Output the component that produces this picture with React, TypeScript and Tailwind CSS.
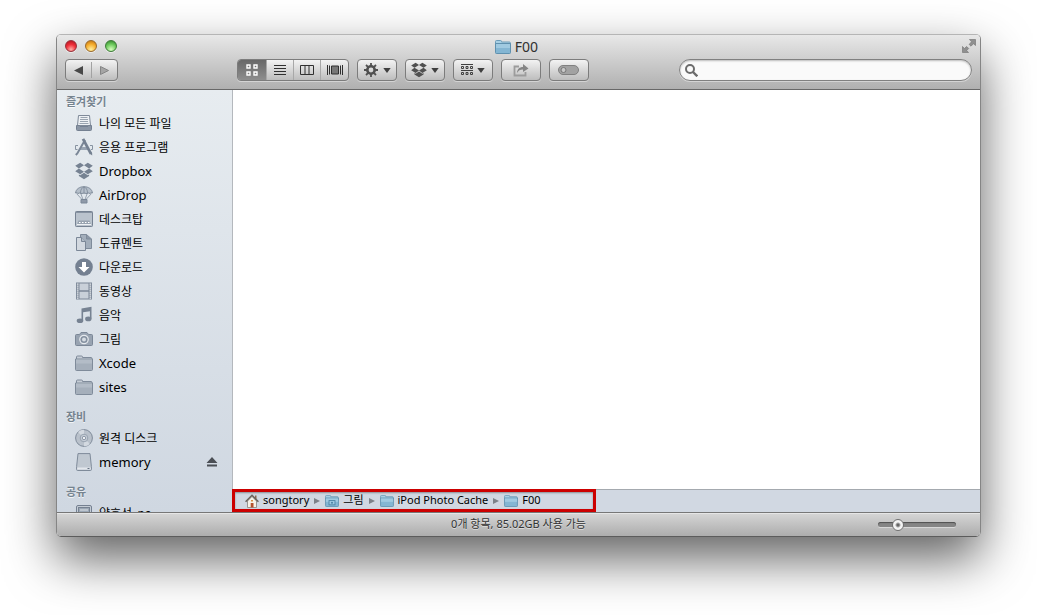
import React, { useState } from "react";

type IconProps = { className?: string };

type SidebarItem = {
    label: string;
    icon: React.FC<IconProps>;
    ejectable?: boolean;
};

type SidebarSection = {
    title: string;
    items: SidebarItem[];
};

const Svg: React.FC<{ children: React.ReactNode }> = ({ children }) => (
    <svg viewBox="0 0 18 18" className="w-[18px] h-[18px] shrink-0" aria-hidden="true">
        {children}
    </svg>
);

const AllFilesIcon = () => (
    <Svg>
        <path d="M3.5 1.5h11l1 10h-13z" fill="#eef1f4" stroke="#7f8a99" />
        <path d="M5.500 3.500h7M5 5.500h8M5 7.500h8M4.500 9.500h9" stroke="#9aa4b0" />
        <path d="M1.500 11.500h3l.5 1h8l.5-1h3v4q0 1-1 1h-13q-1 0-1-1z" fill="#8b96a5" stroke="#748091" />
    </Svg>
);

const ApplicationsIcon = () => (
    <Svg>
        <path d="M3 7.500H.5v4h2M15 7.500h2.500v4H16" fill="none" stroke="#8793a1" />
        <path d="M5 9h8v3H5z" fill="#9aa5b3" />
        <path d="M10 2L2.300 15.500.8 17" fill="none" stroke="#7b8797" strokeWidth="2" />
        <path d="M8 .8l8 15" stroke="#748091" strokeWidth="2.800" />
        <path d="M14.600 15.500l2.600 2-.2-3.300" fill="#748091" />
    </Svg>
);

const dropboxPath =
    "M5.2.8L9 3.3 3.9 6.5.2 3.8zM12.8.8L9 3.3l5.1 3.2 3.7-2.7zM.2 9.3l3.7-2.8L9 9.7l-3.8 2.6zM17.8 9.3l-3.7-2.8L9 9.7l3.8 2.6zM9 10.7l3.8 2.6 1.3-.8v1.6L9 17.2l-5.1-3.1v-1.6l1.3.8z";

const DropboxIcon = () => (
    <Svg>
        <path d={dropboxPath} fill="#768292" />
    </Svg>
);

const AirDropIcon = () => (
    <Svg>
        <path d="M.6 7C.8 3.200 4.500.7 9 .7s8.200 2.500 8.400 6.300q-1.200-1-2.400.5-1.200-1-3 0Q9 6.800 6 7.500q-1.800-1-3 0Q1.800 6 .6 7z" fill="#b5bfca" stroke="#7f8b9a" />
        <path d="M5.500 7C5.500 3.500 7 1.500 9 1c2 .5 3.500 2.500 3.500 6M9 1v6" fill="none" stroke="#7f8b9a" strokeWidth=".9" />
        <path d="M1.500 7.500L7 13.500M5.800 7.500L8 13.500M12.200 7.500L10 13.500M16.500 7.500L11 13.500" stroke="#8490a0" strokeWidth=".8" />
        <path d="M6 13.500h6v3.500H6z" fill="#8e99a8" stroke="#7b8797" />
    </Svg>
);

const DesktopIcon = () => (
    <Svg>
        <rect x=".5" y="1.500" width="17" height="15" rx=".8" fill="#bac3cd" stroke="#768292" />
        <path d="M1 2.500h16" stroke="#8692a1" />
        <path d="M3.500 10.500h11l1.500 4H2z" fill="#98a3b0" />
        <path d="M2 14.500h14" stroke="#eef1f4" />
        <path d="M4 12.500h1.500M7 12.500h1.500M10 12.500h1.500M13 12.500h1.500" stroke="#fff" />
    </Svg>
);

const DocumentsIcon = () => (
    <Svg>
        <path d="M5.500.5h6l5 4.500v9.500h-11z" fill="#a3aebb" stroke="#7f8b9a" />
        <path d="M11.500.5V5h5" fill="#8c98a7" stroke="#7f8b9a" />
        <path d="M1.500 3.500h5l4 4v9h-9z" fill="#d3d9e0" stroke="#7b8797" />
        <path d="M6.500 3.500v4h4" fill="#b3bdc8" stroke="#7b8797" />
    </Svg>
);

const DownloadsIcon = () => (
    <Svg>
        <circle cx="9" cy="9" r="8.800" fill="#748091" />
        <path d="M7 4h4v5h3.500L9 14.500 3.500 9H7z" fill="#fff" />
    </Svg>
);

const MoviesIcon = () => (
    <Svg>
        <path d="M1 .5h16v17H1z" fill="#7b8797" />
        <path d="M4.500 1.500h9v6.800h-9zM4.500 9.700h9v6.800h-9z" fill="#c9d0d9" />
        <path d="M2.700 1.500v16M15.300 1.500v16" stroke="#e6eaee" strokeWidth="1.600" strokeDasharray="1.200 .8" />
    </Svg>
);

const MusicIcon = () => (
    <Svg>
        <path d="M6.500 2.500L16.500.8v12h-1.600V5.200L8.100 6.300v8.200H6.500z" fill="#768292" />
        <ellipse cx="5" cy="14.800" rx="3.300" ry="2.300" fill="#768292" />
        <ellipse cx="13.300" cy="12.900" rx="3.200" ry="2.300" fill="#768292" />
    </Svg>
);

const PicturesIcon = () => (
    <Svg>
        <path d="M.5 5.500q0-1 1-1h3l1.500-2h6l1.500 2h3q1 0 1 1v9q0 1-1 1h-15q-1 0-1-1z" fill="#98a3b1" stroke="#7b8797" />
        <circle cx="9" cy="9.500" r="4.800" fill="#e6eaee" />
        <circle cx="9" cy="9.500" r="3.600" fill="#8490a0" />
        <circle cx="9" cy="9.500" r="2" fill="#d6dce2" />
    </Svg>
);

const FolderIcon = () => (
    <Svg>
        <path d="M1.500 5V3q0-1 1-1h4q1 0 1 1v.5h8.500q1 0 1 1V6" fill="#c6cdd6" stroke="#7f8b9a" />
        <path d="M.5 5h17v10.500q0 1-1 1h-15q-1 0-1-1z" fill="#a5afbb" stroke="#7f8b9a" />
        <path d="M1 5.500h16v4H1z" fill="#b3bcc7" />
    </Svg>
);

const DiscIcon = () => (
    <Svg>
        <circle cx="9" cy="9" r="8.400" fill="#b9c1cb" stroke="#7f8b9a" />
        <path d="M9 9L3 3q3-2.500 6-2.300zM9 9l6 6q-3 2.500-6 2.300z" fill="#d3d9e0" />
        <circle cx="9" cy="9" r="3.800" fill="#c6cdd6" stroke="#98a3b0" />
        <circle cx="9" cy="9" r="1.700" fill="#eef1f4" stroke="#8e99a8" />
    </Svg>
);

const DriveIcon = () => (
    <Svg>
        <path d="M3 .6h12l1.400 13v2.900q0 1-1 1H2.600q-1 0-1-1v-2.900z" fill="#c0c8d1" stroke="#7f8b9a" />
        <path d="M2.200 14.500h13.600v2H2.200z" fill="#e3e7ec" />
        <path d="M12.500 15.500h2" stroke="#657283" />
    </Svg>
);

const ComputerIcon = () => (
    <Svg>
        <rect x="1.500" y="1.500" width="15" height="14" rx="1.500" fill="#c4ccd5" stroke="#748091" />
        <rect x="3.500" y="3.500" width="11" height="9" fill="#9ba7b5" stroke="#768292" />
        <path d="M5 6h8" stroke="#dfe4e9" />
    </Svg>
);

const BlueFolder: React.FC<IconProps & { pictures?: boolean }> = ({ className, pictures }) => (
    <svg viewBox="0 0 16 14" className={className} aria-hidden="true">
        <path d="M.5 4V1.500q0-1 1-1h4q1 0 1 1v.5h8q.8 0 .8 1V5" fill="#a8d0e5" stroke="#6d9cb8" />
        <path d="M.5 3.500h15v9q0 1-.8 1H1.300q-.8 0-.8-1z" fill="#84b6d3" stroke="#5f91af" />
        <path d="M1 4h14v4H1z" fill="#a0cae1" />
        {pictures && (
            <>
                <rect x="4.500" y="6.500" width="7" height="5" fill="#9cc8df" stroke="#4a82a3" />
                <circle cx="8" cy="9" r="1.200" fill="#4a82a3" />
            </>
        )}
    </svg>
);

const HomeIcon: React.FC<IconProps> = ({ className }) => (
    <svg viewBox="0 0 14 14" className={className} aria-hidden="true">
        <path d="M2.500 7L7 2.500 11.500 7v6.500h-9z" fill="#f6f2e8" stroke="#88817a" strokeWidth=".8" />
        <path d="M10 1.500h1.500v4H10z" fill="#8d6a52" />
        <path d="M.6 7.800L7 1.300l6.400 6.500" fill="none" stroke="#6a625c" strokeWidth="1.500" />
        <path d="M5.700 9h2.800v4.500H5.700z" fill="#b4502c" />
        <path d="M6 6h2v1.500H6z" fill="#d48d45" />
    </svg>
);

const sections: SidebarSection[] = [
    {
        title: "즐겨찾기",
        items: [
            { label: "나의 모든 파일", icon: AllFilesIcon },
            { label: "응용 프로그램", icon: ApplicationsIcon },
            { label: "Dropbox", icon: DropboxIcon },
            { label: "AirDrop", icon: AirDropIcon },
            { label: "데스크탑", icon: DesktopIcon },
            { label: "도큐멘트", icon: DocumentsIcon },
            { label: "다운로드", icon: DownloadsIcon },
            { label: "동영상", icon: MoviesIcon },
            { label: "음악", icon: MusicIcon },
            { label: "그림", icon: PicturesIcon },
            { label: "Xcode", icon: FolderIcon },
            { label: "sites", icon: FolderIcon },
        ],
    },
    {
        title: "장비",
        items: [
            { label: "원격 디스크", icon: DiscIcon },
            { label: "memory", icon: DriveIcon, ejectable: true },
        ],
    },
    {
        title: "공유",
        items: [{ label: "양호석_pc", icon: ComputerIcon }],
    },
];

const lights = [
    { label: "Close", color: "bg-[radial-gradient(circle_at_50%_85%,#ffb0a8,#f0303a_50%,#a8101c)] border-[#96303a]" },
    { label: "Minimize", color: "bg-[radial-gradient(circle_at_50%_85%,#fff0a0,#f5ac2c_55%,#b86c10)] border-[#98692c]" },
    { label: "Zoom", color: "bg-[radial-gradient(circle_at_50%_85%,#d8ffc0,#6cc95c_55%,#2c7c28)] border-[#3d7a38]" },
];

const viewModes = [
    {
        label: "Icons",
        icon: (
            <svg viewBox="0 0 12 12" className="w-3 h-3" fill="none" stroke="currentColor" strokeWidth="1.400">
                <path d="M1 1h3v3H1zM8 1h3v3H8zM1 8h3v3H1zM8 8h3v3H8z" />
            </svg>
        ),
    },
    {
        label: "List",
        icon: (
            <svg viewBox="0 0 12 12" className="w-3 h-3" stroke="currentColor">
                <path d="M0 1.500h12M0 4.500h12M0 7.500h12M0 10.500h12" />
            </svg>
        ),
    },
    {
        label: "Columns",
        icon: (
            <svg viewBox="0 0 14 12" className="w-3.5 h-3" fill="none" stroke="currentColor">
                <path d="M.5 1.500h13v9H.5zM5 1v10M9 1v10" />
            </svg>
        ),
    },
    {
        label: "Cover Flow",
        icon: (
            <svg viewBox="0 0 16 12" className="w-4 h-3" stroke="currentColor">
                <path d="M.5 1v10M2.500 1.500v9M13.500 1.500v9M15.500 1v10" />
                <path d="M4.500 2h7v8h-7z" fill="#777" />
            </svg>
        ),
    },
];

const crumbs = ["songtory", "그림", "iPod Photo Cache", "F00"];

const buttonLook =
    "h-[22px] flex items-center justify-center rounded-[4px] border border-[#7c7c7c] bg-linear-to-b from-[#f3f3f3] to-[#bdbdbd] shadow-[0_1px_0_rgba(255,255,255,0.4)]";

const Caret = () => (
    <svg viewBox="0 0 8 5" className="w-2 h-[5px]" aria-hidden="true">
        <path d="M.3 0h7.400L4 5z" fill="#3f3f3f" />
    </svg>
);

const ToolButton: React.FC<{ label: string; children: React.ReactNode }> = ({ label, children }) => (
    <button type="button" aria-label={label} className={`${buttonLook} w-10 gap-1`}>
        {children}
    </button>
);

const Toolbar: React.FC = () => {
    const [view, setView] = useState("Icons");

    return (
        <div className="flex items-center gap-2 px-2">
            <div className={`${buttonLook} w-[53px]`}>
                <button type="button" aria-label="Back" className="flex-1 flex justify-center">
                    <svg viewBox="0 0 9 9" className="w-[9px] h-[9px]">
                        <path d="M9 0v9L0 4.500z" fill="#484848" />
                    </svg>
                </button>
                <span className="w-px h-4 bg-[#a2a2a2]" />
                <button type="button" aria-label="Forward" className="flex-1 flex justify-center">
                    <svg viewBox="0 0 9 9" className="w-[9px] h-[9px]">
                        <path d="M.5.5v8l8-4z" fill="#a5a5a5" stroke="#858585" />
                    </svg>
                </button>
            </div>

            <div className={`${buttonLook} w-28 ml-[111px] overflow-hidden`}>
                {viewModes.map((mode) => (
                    <button
                        key={mode.label}
                        type="button"
                        aria-label={mode.label}
                        aria-pressed={view === mode.label}
                        onClick={() => setView(mode.label)}
                        className="w-[27px] first:w-auto first:flex-1 h-5 flex items-center justify-center text-[#303030] border-r border-[#a8a8a8] last:border-r-0 aria-pressed:bg-linear-to-b aria-pressed:from-[#686868] aria-pressed:to-[#8e8e8e] aria-pressed:text-white"
                    >
                        {mode.icon}
                    </button>
                ))}
            </div>

            <ToolButton label="Action">
                <svg viewBox="0 0 16 16" className="w-4 h-4">
                    <circle cx="8" cy="8" r="3.700" fill="none" stroke="#505050" strokeWidth="2.600" />
                    <path
                        d="M8 1v3M8 12v3M1 8h3M12 8h3M3 3l2.200 2.200M10.800 10.800L13 13M3 13l2.200-2.200M10.800 5.200L13 3"
                        stroke="#505050"
                        strokeWidth="1.800"
                    />
                </svg>
                <Caret />
            </ToolButton>
            <ToolButton label="Dropbox">
                <svg viewBox="0 0 18 18" className="w-4 h-4">
                    <path d={dropboxPath} fill="#505050" />
                </svg>
                <Caret />
            </ToolButton>
            <ToolButton label="Arrange">
                <svg viewBox="0 0 12 12" className="w-3 h-3" fill="none" stroke="#404040">
                    <path d="M0 .5h12M0 6.500h12" />
                    <path d="M.5 2.500h2v2h-2zM5 2.500h2v2H5zM9.500 2.500h2v2h-2zM.5 8.500h2v2h-2zM5 8.500h2v2H5zM9.500 8.500h2v2h-2z" />
                </svg>
                <Caret />
            </ToolButton>
            <ToolButton label="Share">
                <svg viewBox="0 0 16 14" className="w-4 h-3.5">
                    <path d="M6 3.500H1.500v9h11V9" fill="none" stroke="#9c9c9c" strokeWidth="1.800" />
                    <path d="M4 10c.2-4 2.500-6 6-6V1l5.500 4.500L10 9V6.500c-3 0-4.500 1-6 3.500z" fill="#868686" />
                </svg>
            </ToolButton>
            <ToolButton label="Edit Tags">
                <svg viewBox="0 0 22 10" className="w-[22px] h-2.5 shrink-0">
                    <rect x=".5" y=".5" width="20" height="9" rx="4.500" fill="#a2a2a2" stroke="#808080" />
                    <circle cx="5.500" cy="5" r="2.500" fill="#c8c8c8" stroke="#777" />
                </svg>
            </ToolButton>

            <label className="ml-auto w-[293px] h-[22px] flex items-center gap-1 px-[5px] rounded-full border border-[#808080] bg-[#fafafa] shadow-[inset_0_1px_2px_rgba(0,0,0,0.25),0_1px_0_rgba(255,255,255,0.4)]">
                <svg viewBox="0 0 13 13" className="w-[13px] h-[13px] shrink-0" fill="none" stroke="#6c6c6c" strokeWidth="2">
                    <circle cx="5" cy="5" r="4" />
                    <path d="M8 8l4.300 4.300" strokeWidth="2.400" />
                </svg>
                <input type="search" aria-label="Search" className="min-w-0 flex-1 bg-transparent outline-none" />
            </label>
        </div>
    );
};

const Sidebar: React.FC = () => (
    <aside className="w-[175px] shrink-0 flex flex-col gap-[9px] pt-[3px] overflow-hidden bg-linear-to-b from-[#e7ecf0] to-[#cfd7e1]">
        {sections.map((section) => (
            <section key={section.title} className="shrink-0">
                <h2 className="h-[18px] pl-[9px] flex items-center text-[11px] font-bold text-[#75838f] [text-shadow:0_1px_0_rgba(255,255,255,0.7)]">
                    {section.title}
                </h2>
                <ul>
                    {section.items.map(({ label, icon: Icon, ejectable }) => (
                        <li key={label} className="h-6 pl-[18px] pr-3.5 flex items-center justify-between">
                            <a href="#" className={`flex items-center gap-1.5 whitespace-nowrap ${/^[a-z]/i.test(label) ? "text-[13px]" : "text-xs"}`}>
                                <Icon />
                                <span className="pt-0.5">{label}</span>
                            </a>
                            {ejectable && (
                                <button type="button" aria-label="Eject">
                                    <svg viewBox="0 0 12 10" className="w-3 h-2.5">
                                        <path d="M6 0l5.500 6H.5zM1 7.500h10v2H1z" fill="#4b4f55" />
                                    </svg>
                                </button>
                            )}
                        </li>
                    ))}
                </ul>
            </section>
        ))}
    </aside>
);

const PathBar: React.FC = () => (
    <div className="h-[23px] shrink-0 bg-[#d1d8e2] shadow-[inset_0_1px_0_#a4a9af]">
        <nav aria-label="Path" className="w-[364px] h-full flex items-center border-[3px] border-[#cc0000] pl-2.5 text-[11px] shadow-[inset_0_1px_2px_rgba(0,0,0,0.35)]">
            {crumbs.map((crumb, i) => (
                <React.Fragment key={crumb}>
                    {i > 0 && (
                        <svg viewBox="0 0 6 6" className="w-1.5 h-1.5 mx-[5px]" aria-hidden="true">
                            <path d="M0 0v6l6-3z" fill="#7d8289" />
                        </svg>
                    )}
                    <a href="#" className="flex items-center gap-1 whitespace-nowrap">
                        {i === 0 ? <HomeIcon className="w-3.5 h-3.5" /> : <BlueFolder className="w-3.5 h-3" pictures={i === 1} />}
                        {crumb}
                    </a>
                </React.Fragment>
            ))}
        </nav>
    </div>
);

export default function App() {
    const [size, setSize] = useState(21);

    return (
        <div className="h-screen flex flex-col bg-white px-14 pt-[34px] pb-[78px] overflow-hidden text-black font-['Noto_Sans','Noto_Sans_CJK_KR',sans-serif]">
            <div className="flex-1 min-h-0 flex flex-col overflow-hidden rounded-[5px] border border-[#858585] border-t-[#b5b5b5] border-b-[#5c5c5c] shadow-[0_22px_50px_rgba(0,0,0,0.62)]">
                <header className="shrink-0 pb-2 border-b border-[#686868] bg-linear-to-b from-[#e8e8e8] to-[#b0b0b0]">
                    <div className="h-[22px] mb-0.5 grid grid-cols-3 items-center px-1">
                        <div className="flex gap-2 pl-1">
                            {lights.map((light) => (
                                <button
                                    key={light.label}
                                    type="button"
                                    aria-label={light.label}
                                    className={`w-3 h-3 rounded-full border shadow-[0_1px_0_rgba(255,255,255,0.5)] ${light.color}`}
                                />
                            ))}
                        </div>
                        <h1 className="pt-0.5 pr-1 flex items-center justify-center gap-1 text-sm text-[#303030]">
                            <BlueFolder className="w-4 h-3.5" />
                            F00
                        </h1>
                        <button type="button" aria-label="Full Screen" className="justify-self-end">
                            <svg viewBox="0 0 14 14" className="w-3.5 h-3.5" fill="#909090" stroke="#7a7a7a" strokeWidth=".7">
                                <path d="M7.500.5h6v6l-2-1.800-2.500 2.500-1.800-1.800 2.300-2.600z" />
                                <path d="M.5 7.500v6h6l-1.800-2 2-2-2-2-2.300 2z" />
                            </svg>
                        </button>
                    </div>
                    <Toolbar />
                </header>

                <div className="flex-1 min-h-0 flex">
                    <Sidebar />
                    <main className="flex-1 min-w-0 flex flex-col">
                        <div className="flex-1 bg-white border-l border-[#b4b8bd]" />
                        <PathBar />
                    </main>
                </div>

                <footer className="h-6 shrink-0 grid grid-cols-3 items-center border-t border-[#777] bg-linear-to-b from-[#d6d6d6] to-[#adadad] shadow-[inset_0_1px_0_#e6e6e6]">
                    <p className="col-start-2 text-center text-[11px] text-[#333] whitespace-nowrap [text-shadow:0_1px_0_rgba(255,255,255,0.5)]">
                        0개 항목, 85.02GB 사용 가능
                    </p>
                    <input
                        type="range"
                        aria-label="Icon size"
                        value={size}
                        onChange={(e) => setSize(Number(e.target.value))}
                        className="justify-self-end mr-6 w-[78px] h-[5px] appearance-none rounded-full bg-[#858585] shadow-[inset_0_1px_1px_#505050,0_1px_0_#d8d8d8] [&::-webkit-slider-thumb]:appearance-none [&::-webkit-slider-thumb]:w-3 [&::-webkit-slider-thumb]:h-3 [&::-webkit-slider-thumb]:rounded-full [&::-webkit-slider-thumb]:border [&::-webkit-slider-thumb]:border-[#707070] [&::-webkit-slider-thumb]:bg-[radial-gradient(circle,#666_0_1px,#f4f4f4_3px)]"
                    />
                </footer>
            </div>
        </div>
    );
}
